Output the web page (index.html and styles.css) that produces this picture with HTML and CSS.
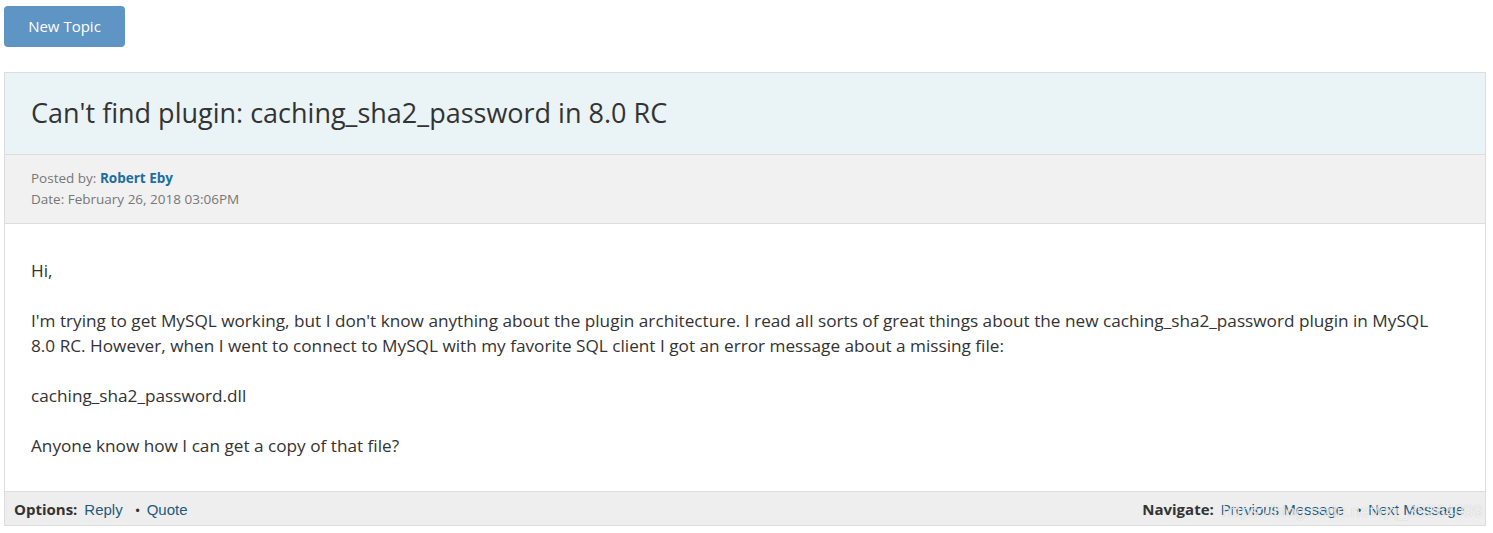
FILE: index.html
```html
<!DOCTYPE html>
<html>
<head>
<meta charset="utf-8">
<link rel="stylesheet" href="styles.css">
</head>
<body>
<div class="top">
  <a class="btn" href="#">New Topic</a>
</div>
<div class="panel">
  <div class="title-bar"><h1>Can't find plugin: caching_sha2_password in 8.0 RC</h1></div>
  <div class="meta">
    <div>Posted by: <a class="author" href="#">Robert Eby</a></div>
    <div>Date: February 26, 2018 03:06PM</div>
  </div>
  <div class="body">
    <p>Hi,</p>
    <p>I'm trying to get MySQL working, but I don't know anything about the plugin architecture. I read all sorts of great things about the new caching_sha2_password plugin in MySQL 8.0 RC. However, when I went to connect to MySQL with my favorite SQL client I got an error message about a missing file:</p>
    <p>caching_sha2_password.dll</p>
    <p>Anyone know how I can get a copy of that file?</p>
  </div>
</div>
<div class="footer">
  <div class="opts"><b>Options:</b> <a href="#">Reply</a> <span class="dot">&bull;</span> <a href="#">Quote</a></div>
  <div class="opts"><b>Navigate:</b> <a href="#">Previous Message</a> <span class="dot">&bull;</span> <a href="#">Next Message</a></div>
  <span class="wm">https://blog.csdn.net/qq_35264999</span>
</div>
</body>
</html>
```
FILE: styles.css
```css
html, body { margin: 0; padding: 0; background: #fff; }
body { padding: 6px 7px 0 4px; font-family: "Open Sans", sans-serif; color: #333; }
.top { height: 66px; }
.btn {
  display: inline-block; width: 121px; height: 41px; line-height: 41px;
  text-align: center; background: #5f95c5; color: #fff; border-radius: 4px;
  font-size: 15px; text-decoration: none;
}
.panel { border: 1px solid #dddddd; border-bottom: none; }
.title-bar { background: #eaf3f6; border-bottom: 1px solid #dddddd; padding: 22px 26px 23px 26px; }
.title-bar h1 { margin: 0; font-weight: 400; font-size: 27px; line-height: 36px; color: #333; }
.meta { background: #f1f1f1; border-bottom: 1px solid #dddddd; padding: 13px 26px 13px 26px; font-size: 13.5px; line-height: 21px; color: #777; }
.author { color: #1b6fa0; font-weight: 700; text-decoration: none; }
.body { padding: 34px 40px 33px 26px; font-size: 17.2px; line-height: 25px; color: #333; }
.body p { margin: 0 0 25px 0; }
.body p:last-child { margin-bottom: 0; }
.footer {
  position: relative; background: #eeeeee; border: 1px solid #dddddd;
  display: flex; justify-content: space-between; padding: 0 21px 0 9px;
  height: 33px; line-height: 34px; font-size: 15px;
}
.opts b { font-family: "Open Sans", sans-serif; font-weight: 700; color: #333; margin-right: 3px; }
.opts a { font-family: "Liberation Sans", Arial, sans-serif; font-size: 15px; color: #1d5a7e; text-decoration: none; }
.dot { font-family: "Liberation Sans", sans-serif; font-size: 12px; color: #333; margin: 0 3px 0 9px; }
.wm {
  position: absolute; right: 2px; top: 3px; font-family: "Liberation Sans", sans-serif;
  font-size: 17px; color: rgba(255,255,255,0.75); text-shadow: 0 0 1px rgba(110,110,110,0.4);
  pointer-events: none;
}
```
